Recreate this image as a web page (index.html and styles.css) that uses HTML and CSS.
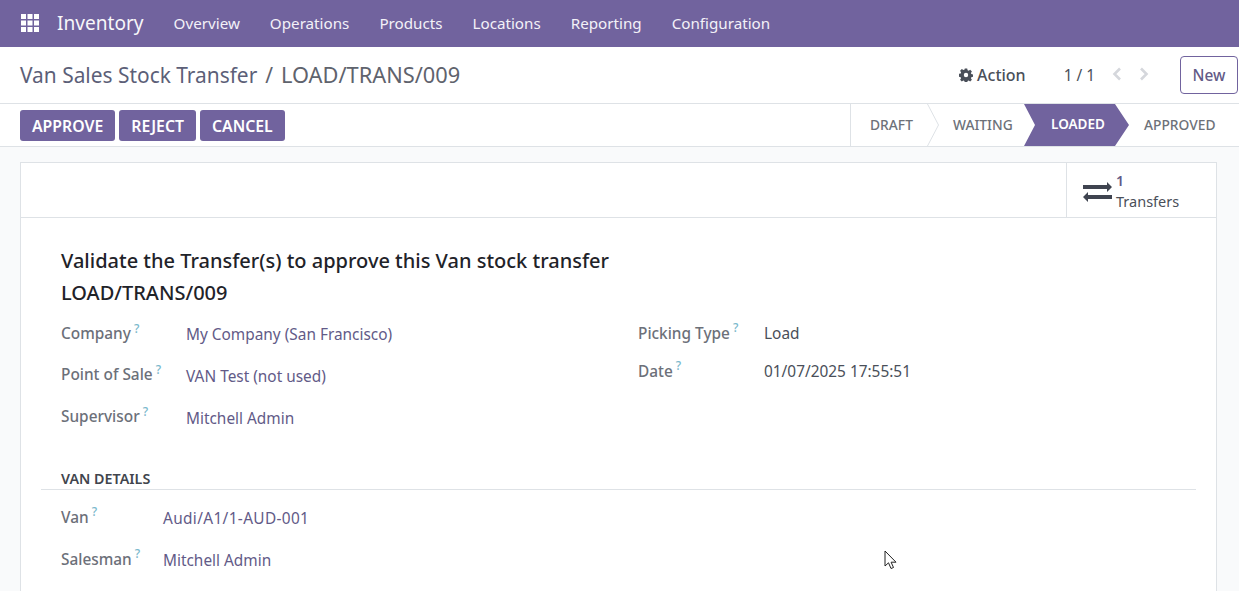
FILE: index.html
```html
<!DOCTYPE html>
<html lang="en">
<head>
  <meta charset="UTF-8" />
  <title>Inventory - LOAD/TRANS/009</title>
  <link rel="stylesheet" href="styles.css">
</head>
<body>
  <header class="navbar">
    <svg class="apps-icon" width="20" height="20" viewBox="0 0 20 20" fill="#fff">
      <rect x="1" y="1" width="5" height="5"/><rect x="7.5" y="1" width="5" height="5"/><rect x="14" y="1" width="5" height="5"/>
      <rect x="1" y="7.5" width="5" height="5"/><rect x="7.5" y="7.5" width="5" height="5"/><rect x="14" y="7.5" width="5" height="5"/>
      <rect x="1" y="14" width="5" height="5"/><rect x="7.5" y="14" width="5" height="5"/><rect x="14" y="14" width="5" height="5"/>
    </svg>
    <span class="brand">Inventory</span>
    <nav class="menu">
      <a href="#">Overview</a>
      <a href="#">Operations</a>
      <a href="#">Products</a>
      <a href="#">Locations</a>
      <a href="#">Reporting</a>
      <a href="#">Configuration</a>
    </nav>
  </header>

  <div class="title-bar">
    <div class="crumbs"><a href="#">Van Sales Stock Transfer</a><span class="sep">/</span><span class="record">LOAD/TRANS/009</span></div>
    <div class="title-tools">
      <span class="action">
        <svg width="14" height="14" viewBox="0 0 14 14"><path fill="#4a4f59" fill-rule="evenodd" d="M5.800.5h2.400l.4 1.800 1 .4 1.600-1 1.700 1.700-1 1.600.4 1 1.800.4v2.400l-1.800.4-.4 1 1 1.600-1.700 1.700-1.600-1-1 .4-.4 1.800H5.800l-.4-1.800-1-.4-1.600 1-1.700-1.700 1-1.600-.4-1-1.800-.4V5.800l1.800-.4.4-1-1-1.600 1.700-1.700 1.600 1 1-.4zM7 4.800a2.200 2.200 0 1 0 0 4.400 2.200 2.200 0 0 0 0-4.400z"/></svg>
        Action
      </span>
      <span class="pager">1 / 1</span>
      <span class="pager-arrows">
        <svg width="12" height="14" viewBox="0 0 12 14"><path d="M9 1.500 3.500 7 9 12.500" fill="none" stroke="#d5d7dc" stroke-width="2.600"/></svg>
        <svg width="12" height="14" viewBox="0 0 12 14"><path d="M3 1.500 8.500 7 3 12.500" fill="none" stroke="#d5d7dc" stroke-width="2.600"/></svg>
      </span>
      <button class="btn-new">New</button>
    </div>
  </div>

  <div class="status-bar">
    <div class="actions">
      <button class="btn-primary">APPROVE</button>
      <button class="btn-primary">REJECT</button>
      <button class="btn-primary">CANCEL</button>
    </div>
    <div class="stages">
      <span class="stage stage-draft">DRAFT</span>
      <svg class="chevron" width="12" height="42" viewBox="0 0 12 42"><path d="M.5 0 11.500 21 .5 42" fill="none" stroke="#dee2e6"/></svg>
      <span class="stage stage-waiting">WAITING</span>
      <span class="stage stage-current">LOADED</span>
      <span class="stage stage-approved">APPROVED</span>
    </div>
  </div>

  <main class="content">
    <section class="sheet">
      <div class="button-box">
        <div class="stat-button">
          <svg class="stat-icon" width="29" height="20" viewBox="0 0 29 20" fill="#3f4450">
            <path d="M0 3h24V0l5 5-5 5V7H0z"/>
            <path d="M29 13H5v-3l-5 5 5 5v-3h24z"/>
          </svg>
          <div class="stat-text"><span class="stat-value">1</span><span>Transfers</span></div>
        </div>
      </div>

      <div class="sheet-body">
        <h1 class="notice">Validate the Transfer(s) to approve this Van stock transfer<br>LOAD/TRANS/009</h1>

        <div class="groups">
          <div class="group group-left">
            <div class="field"><label>Company<sup>?</sup></label><a href="#">My Company (San Francisco)</a></div>
            <div class="field"><label>Point of Sale<sup>?</sup></label><a href="#">VAN Test (not used)</a></div>
            <div class="field"><label>Supervisor<sup>?</sup></label><a href="#">Mitchell Admin</a></div>
          </div>
          <div class="group group-right">
            <div class="field"><label>Picking Type<sup>?</sup></label><span>Load</span></div>
            <div class="field"><label>Date<sup>?</sup></label><span>01/07/2025 17:55:51</span></div>
          </div>
        </div>

        <h2 class="section-title">VAN DETAILS</h2>
        <div class="group group-van">
          <div class="field"><label>Van<sup>?</sup></label><a class="van-code" href="#">Audi/A1/1-AUD-001</a></div>
          <div class="field"><label>Salesman<sup>?</sup></label><a href="#">Mitchell Admin</a></div>
        </div>
      </div>
    </section>
  </main>

  <svg class="cursor" width="13" height="20" viewBox="0 0 13 20"><path d="M1 1v15l3.500-3.200L7 18.500l2.500-1-2.400-5.300H12z" fill="#fff" stroke="#222" stroke-width="1"/></svg>
</body>
</html>
```

FILE: styles.css
```css
* {
  box-sizing: border-box;
}
html, body {
  height: 591px;
  overflow: hidden;
}
body {
  margin: 0;
  font-family: "Noto Sans", "Open Sans", sans-serif;
  font-size: 15.4px;
  color: #4a4f59;
  background-color: #f9fafb;
}
a {
  color: #625a87;
  text-decoration: none;
}

/* Top navbar */
.navbar {
  display: flex;
  align-items: center;
  height: 47px;
  padding-left: 20px;
  background-color: #71639e;
  color: #fff;
}
.apps-icon {
  flex: none;
  margin-bottom: 2px;
}
.brand {
  margin-left: 17px;
  margin-bottom: 1px;
  font-size: 19.1px;
  opacity: 0.95;
}
.menu {
  display: flex;
  gap: 30px;
  margin-left: 30px;
  padding-bottom: 2px;
}
.menu a {
  color: #f3f1f8;
  font-size: 15.2px;
}

/* Breadcrumb row */
.title-bar {
  display: flex;
  justify-content: space-between;
  align-items: center;
  height: 57px;
  padding: 0 1px 0 20px;
  background-color: #fff;
  border-bottom: 1px solid #dee2e6;
}
.crumbs {
  font-size: 20.9px;
  color: #5f636d;
  margin-top: -1px;
}
.crumbs a {
  color: #5c5f78;
}
.record {
  font-size: 21.8px;
}
.sep {
  margin: 0 8px;
}
.title-tools {
  display: flex;
  align-items: center;
}
.action {
  display: flex;
  align-items: center;
  gap: 4px;
  font-weight: 500;
  font-size: 16px;
}
.pager {
  margin-left: 38px;
}
.pager-arrows {
  display: flex;
  gap: 15px;
  margin-left: 16px;
  margin-top: -3px;
}
.btn-new {
  width: 58px;
  height: 38px;
  margin-left: 30px;
  padding: 0;
  font: 500 15.4px "Noto Sans", sans-serif;
  color: #625a87;
  background-color: #fff;
  border: 1px solid #71639e;
  border-radius: 4px;
}

/* Buttons and statusbar */
.status-bar {
  display: flex;
  justify-content: space-between;
  height: 43px;
  padding-left: 20px;
  padding-right: 6px;
  background-color: #fff;
  border-bottom: 1px solid #dee2e6;
}
.actions {
  display: flex;
  gap: 4px;
  padding-top: 6px;
}
.btn-primary {
  height: 31px;
  padding: 0 12px;
  font: 600 15.8px "Noto Sans", sans-serif;
  color: #fff;
  background-color: #71639e;
  border: none;
  border-radius: 3px;
}
.stages {
  display: flex;
  align-items: stretch;
  height: 42px;
  border-left: 1px solid #dee2e6;
}
.stage {
  display: flex;
  align-items: center;
  padding-bottom: 2px;
  font-size: 13.8px;
  font-weight: 500;
  color: #6d7179;
}
.stage-draft {
  padding-left: 19px;
  width: 76px;
}
.chevron {
  flex: none;
}
.stage-waiting {
  padding-left: 14px;
  width: 85px;
}
.stage-current {
  justify-content: center;
  width: 105px;
  padding-left: 3px;
  font-size: 13.5px;
  color: #fff;
  font-weight: 600;
  background-color: #71639e;
  clip-path: polygon(0 100%, 11px 50%, 0 0, 91px 0, 105px 50%, 91px 100%);
}
.stage-approved {
  padding-left: 15px;
  width: 104px;
}

/* Form sheet */
.content {
  padding: 15px 22px 0 20px;
}
.sheet {
  height: 440px;
  background-color: #fff;
  border: 1px solid #dee2e6;
}
.button-box {
  display: flex;
  justify-content: flex-end;
  height: 55px;
  border-bottom: 1px solid #dee2e6;
}
.stat-button {
  display: flex;
  align-items: center;
  gap: 4px;
  width: 150px;
  padding-left: 16px;
  border-left: 1px solid #dee2e6;
}
.stat-icon {
  margin-top: 3px;
}
.stat-text {
  display: flex;
  flex-direction: column;
  font-size: 14.5px;
  line-height: 20px;
  padding-top: 2px;
}
.stat-value {
  font-size: 14px;
  font-weight: 600;
  color: #625a87;
}
.sheet-body {
  padding: 27px 20px 0;
}
.notice {
  margin: 0 0 0 20px;
  font-size: 20px;
  font-weight: 500;
  line-height: 32px;
  color: #1f2329;
}
.groups {
  display: flex;
  margin-top: 4px;
}
.group-left {
  width: 577px;
}
.field {
  display: flex;
  align-items: center;
  height: 42px;
  padding-left: 20px;
}
.field label {
  flex: none;
  width: 125px;
  font-weight: 500;
  color: #6c7079;
  margin-top: -3px;
}
.group-left .field:first-child label {
  margin-top: -1px;
}
.field sup {
  margin-left: 3px;
  font-size: 12px;
  font-weight: 500;
  color: #7ab8cc;
  line-height: 0;
}
.group-right .field {
  height: 38px;
  margin-top: 1px;
}
.group-right .field label {
  width: 126px;
  margin-top: 0;
}
.group-right .field + .field {
  margin-top: 0;
}
.section-title {
  margin: 30px 0 0;
  padding: 0 20px;
  font-size: 14.3px;
  font-weight: 600;
  line-height: 20px;
  color: #41454d;
  border-bottom: 1px solid #dee2e6;
}
.group-van {
  margin-top: 7px;
}
.group-van .field label {
  width: 102px;
  margin-top: -2px;
}
.van-code {
  letter-spacing: 0.35px;
}
.cursor {
  position: absolute;
  left: 884px;
  top: 550px;
}
```
